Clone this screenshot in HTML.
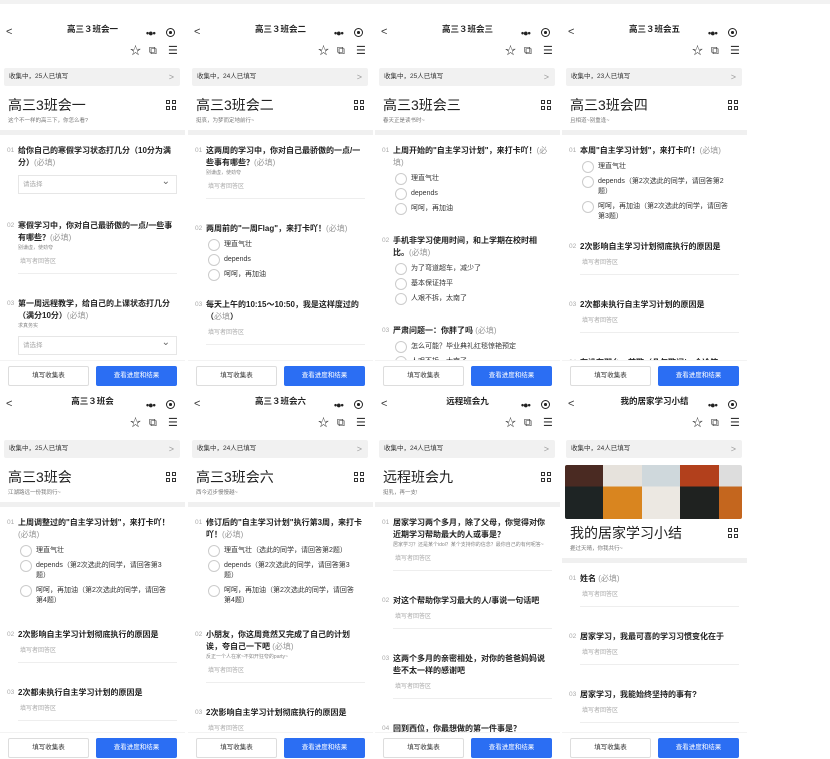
<!DOCTYPE html>
<html><head><meta charset="utf-8"><style>
*{margin:0;padding:0;box-sizing:border-box}
body{width:830px;height:759px;background:#fff;position:relative;overflow:hidden;font-family:"Liberation Sans","Noto Sans CJK SC",sans-serif;color:#222}
.p{position:absolute;width:185px;height:370px;overflow:hidden;background:#fff}
.nav{position:absolute;top:4px;left:0;width:185px;height:14px;font-size:8.5px;font-weight:bold;text-align:center;line-height:14px}
.back{position:absolute;left:6px;top:3px;font-size:11px;font-weight:normal;color:#333;line-height:14px}
.dots{position:absolute;left:146px;top:6px;font-size:9px;letter-spacing:-1px;line-height:10px}
.tgt{position:absolute;left:166px;top:6px;width:9px;height:9px;border:1.3px solid #222;border-radius:50%}
.tgt:after{content:"";position:absolute;left:2px;top:2px;width:2.5px;height:2.5px;background:#222;border-radius:50%}
.ic{position:absolute;top:27px;font-size:11px;line-height:12px;color:#333}
.bar{position:absolute;left:4px;top:50px;width:176px;height:18px;background:#f1f1f1;border-radius:2px;font-size:6.5px;line-height:18px;padding-left:5px;color:#333}
.bar b{position:absolute;right:6px;top:0;font-weight:normal;color:#999;font-size:9px}
.ttl{position:absolute;left:8px;top:78px;font-size:14px;line-height:18px;color:#222}
.grid{position:absolute;left:166px;top:82px;width:10px;height:10px;background:
linear-gradient(#fff,#fff) 4px 0/2px 10px no-repeat,linear-gradient(#fff,#fff) 0 4px/10px 2px no-repeat,#333;outline:0}
.grid:after{content:"";position:absolute;left:1px;top:1px;width:8px;height:8px;background:linear-gradient(#fff,#fff) 0 0/2px 2px no-repeat,linear-gradient(#fff,#fff) 6px 0/2px 2px no-repeat,linear-gradient(#fff,#fff) 0 6px/2px 2px no-repeat,linear-gradient(#fff,#fff) 6px 6px/2px 2px no-repeat;}
.sub{position:absolute;left:8px;top:98px;font-size:5.5px;color:#777}
.band{position:absolute;left:0;top:112px;width:185px;height:5px;background:#f0f0f0}
.qs{position:absolute;left:0;top:117px;width:185px;height:225px;overflow:hidden}
.q{position:relative;padding:10px 8px 4px 18px}
.q .t{font-size:8px;font-weight:bold;line-height:12px;color:#222}
.q .t i{font-style:normal;font-weight:normal;color:#999}
.q .n{position:absolute;left:7px;top:10px;font-size:6.5px;color:#aaa;line-height:12px}
.q .s{font-size:5px;color:#888;line-height:8px}
.o{position:relative;padding-left:16px;padding-right:6px;font-size:7px;line-height:10px;margin:5px 0 5px 2px;color:#333}
.o:before{content:"";position:absolute;left:0;top:-1px;width:10px;height:10px;border:1px solid #ccc;border-radius:50%}
.in{font-size:6px;color:#aaa;height:20px;line-height:17px;border-bottom:1px solid #eee;margin:2px 0 10px 0;padding-left:2px}
.sel{height:19px;border:1px solid #e6e6e6;font-size:6.5px;color:#aaa;line-height:17px;padding-left:4px;margin:6px 0 12px 0;position:relative}
.sel:after{content:"⌄";position:absolute;right:6px;top:-3px;font-size:10px;color:#666}
.ft{position:absolute;left:0;top:342px;width:185px;height:28px;background:#fff;border-top:1px solid #f3f3f3}
.b1{position:absolute;left:8px;top:5px;width:81px;height:20px;border:1px solid #ddd;border-radius:2px;font-size:6.5px;text-align:center;line-height:18px;color:#333}
.b2{position:absolute;left:96px;top:5px;width:81px;height:20px;background:#2b6ef3;border-radius:2px;font-size:6.5px;text-align:center;line-height:20px;color:#fff}
.img{position:absolute;left:3px;top:75px;width:177px;height:54px;border-radius:2px;overflow:hidden;display:flex}
.img div{flex:1;position:relative}
</style></head><body>

<div class="p" style="left:0;top:18px">
<div class="nav"><span class="back">&lt;</span>高三３班会一<span class="dots">•●•</span><span class="tgt"></span></div>
<span class="ic" style="left:130px">☆</span><span class="ic" style="left:149px">⧉</span><span class="ic" style="left:168px">☰</span>
<div class="bar">收集中，25人已填写<b>&gt;</b></div>
<div class="ttl">高三3班会一</div><div class="grid"></div>
<div class="sub">这个不一样的高三下，你怎么看?</div><div class="band"></div>
<div class="qs">
<div class="q"><span class="n">01</span><div class="t">给你自己的寒假学习状态打几分（10分为满分）<i>(必填)</i></div><div class="sel">请选择</div></div>
<div class="q"><span class="n">02</span><div class="t">寒假学习中，你对自己最骄傲的一点/一些事有哪些？<i>(必填)</i></div><div class="s">别谦虚，使劲夸</div><div class="in">填写者回答区</div></div>
<div class="q"><span class="n">03</span><div class="t">第一周远程教学，给自己的上课状态打几分（满分10分）<i>(必填)</i></div><div class="s">求真务实</div><div class="sel">请选择</div></div>
</div>
<div class="ft"><div class="b1">填写收集表</div><div class="b2">查看进度和结果</div></div>
</div>

<div class="p" style="left:188px;top:18px">
<div class="nav"><span class="back">&lt;</span>高三３班会二<span class="dots">•●•</span><span class="tgt"></span></div>
<span class="ic" style="left:130px">☆</span><span class="ic" style="left:149px">⧉</span><span class="ic" style="left:168px">☰</span>
<div class="bar">收集中，24人已填写<b>&gt;</b></div>
<div class="ttl">高三3班会二</div><div class="grid"></div>
<div class="sub">挺哀，为梦而定地前行~</div><div class="band"></div>
<div class="qs">
<div class="q"><span class="n">01</span><div class="t">这两周的学习中，你对自己最骄傲的一点/一些事有哪些？<i>(必填)</i></div><div class="s">别谦虚，使劲夸</div><div class="in">填写者回答区</div></div>
<div class="q"><span class="n">02</span><div class="t">两周前的"一周Flag"，来打卡吖！<i>(必填)</i></div><div class="o">理直气壮</div><div class="o">depends</div><div class="o">呵呵，再加油</div></div>
<div class="q"><span class="n">03</span><div class="t">每天上午的10:15～10:50，我是这样度过的（<i>必填</i>）</div><div class="in">填写者回答区</div></div>
<div class="q"><span class="n">04</span><div class="t">每天10:25以外做些啥，我是这样度过的</div></div>
</div>
<div class="ft"><div class="b1">填写收集表</div><div class="b2">查看进度和结果</div></div>
</div>

<div class="p" style="left:375px;top:18px">
<div class="nav"><span class="back">&lt;</span>高三３班会三<span class="dots">•●•</span><span class="tgt"></span></div>
<span class="ic" style="left:130px">☆</span><span class="ic" style="left:149px">⧉</span><span class="ic" style="left:168px">☰</span>
<div class="bar">收集中，25人已填写<b>&gt;</b></div>
<div class="ttl">高三3班会三</div><div class="grid"></div>
<div class="sub">春天正是读书时~</div><div class="band"></div>
<div class="qs">
<div class="q"><span class="n">01</span><div class="t">上周开始的"自主学习计划"，来打卡吖！<i>(必填)</i></div><div class="o">理直气壮</div><div class="o">depends</div><div class="o">呵呵，再加油</div></div>
<div class="q" style="padding-top:12px"><span class="n" style="top:12px">02</span><div class="t">手机非学习使用时间，和上学期在校时相比。<i>(必填)</i></div><div class="o">为了弯道超车，减少了</div><div class="o">基本保证持平</div><div class="o">人艰不拆，太南了</div></div>
<div class="q" style="padding-top:12px"><span class="n" style="top:12px">03</span><div class="t">严肃问题一：你胖了吗 <i>(必填)</i></div><div class="o">怎么可能？毕业典礼红毯惊艳预定</div><div class="o">人艰不拆，太南了</div></div>
</div>
<div class="ft"><div class="b1">填写收集表</div><div class="b2">查看进度和结果</div></div>
</div>

<div class="p" style="left:562px;top:18px">
<div class="nav"><span class="back">&lt;</span>高三３班会五<span class="dots">•●•</span><span class="tgt"></span></div>
<span class="ic" style="left:130px">☆</span><span class="ic" style="left:149px">⧉</span><span class="ic" style="left:168px">☰</span>
<div class="bar">收集中，23人已填写<b>&gt;</b></div>
<div class="ttl">高三3班会四</div><div class="grid"></div>
<div class="sub">且相道~别重逢~</div><div class="band"></div>
<div class="qs">
<div class="q"><span class="n">01</span><div class="t">本周"自主学习计划"，来打卡吖！<i>(必填)</i></div><div class="o">理直气壮</div><div class="o">depends（第2次选此的同学，请回答第2题）</div><div class="o">呵呵，再加油（第2次选此的同学，请回答第3题）</div></div>
<div class="q"><span class="n">02</span><div class="t">2次影响自主学习计划彻底执行的原因是</div><div class="in">填写者回答区</div></div>
<div class="q"><span class="n">03</span><div class="t">2次都未执行自主学习计划的原因是</div><div class="in">填写者回答区</div></div>
<div class="q"><span class="n">04</span><div class="t">有没有那么一首歌（几句歌词/一个冷笑话），</div></div>
</div>
<div class="ft"><div class="b1">填写收集表</div><div class="b2">查看进度和结果</div></div>
</div>

<div class="p" style="left:0;top:390px;height:369px">
<div class="nav"><span class="back">&lt;</span>高三３班会<span class="dots">•●•</span><span class="tgt"></span></div>
<span class="ic" style="left:130px">☆</span><span class="ic" style="left:149px">⧉</span><span class="ic" style="left:168px">☰</span>
<div class="bar">收集中，25人已填写<b>&gt;</b></div>
<div class="ttl">高三3班会</div><div class="grid"></div>
<div class="sub">江湖路远一份我同行~</div><div class="band"></div>
<div class="qs">
<div class="q"><span class="n">01</span><div class="t">上周调整过的"自主学习计划"，来打卡吖！<i>(必填)</i></div><div class="o">理直气壮</div><div class="o">depends（第2次选此的同学，请回答第3题）</div><div class="o">呵呵，再加油（第2次选此的同学，请回答第4题）</div></div>
<div class="q" style="padding-top:14px"><span class="n" style="top:14px">02</span><div class="t">2次影响自主学习计划彻底执行的原因是</div><div class="in">填写者回答区</div></div>
<div class="q"><span class="n">03</span><div class="t">2次都未执行自主学习计划的原因是</div><div class="in">填写者回答区</div></div>
</div>
<div class="ft"><div class="b1">填写收集表</div><div class="b2">查看进度和结果</div></div>
</div>

<div class="p" style="left:188px;top:390px;height:369px">
<div class="nav"><span class="back">&lt;</span>高三３班会六<span class="dots">•●•</span><span class="tgt"></span></div>
<span class="ic" style="left:130px">☆</span><span class="ic" style="left:149px">⧉</span><span class="ic" style="left:168px">☰</span>
<div class="bar">收集中，24人已填写<b>&gt;</b></div>
<div class="ttl">高三3班会六</div><div class="grid"></div>
<div class="sub">西今迈步慢慢越~</div><div class="band"></div>
<div class="qs">
<div class="q"><span class="n">01</span><div class="t">修订后的"自主学习计划"执行第3周，来打卡吖！<i>(必填)</i></div><div class="o">理直气壮（选此的同学，请回答第2题）</div><div class="o">depends（第2次选此的同学，请回答第3题）</div><div class="o">呵呵，再加油（第2次选此的同学，请回答第4题）</div></div>
<div class="q" style="padding-top:14px"><span class="n" style="top:14px">02</span><div class="t">小朋友，你这周竟然又完成了自己的计划诶，夸自己一下吧 <i>(必填)</i></div><div class="s">反正一个人在家~不如开狂夸的party~</div><div class="in">填写者回答区</div></div>
<div class="q"><span class="n">03</span><div class="t">2次影响自主学习计划彻底执行的原因是</div><div class="in">填写者回答区</div></div>
</div>
<div class="ft"><div class="b1">填写收集表</div><div class="b2">查看进度和结果</div></div>
</div>

<div class="p" style="left:375px;top:390px;height:369px">
<div class="nav"><span class="back">&lt;</span>远程班会九<span class="dots">•●•</span><span class="tgt"></span></div>
<span class="ic" style="left:130px">☆</span><span class="ic" style="left:149px">⧉</span><span class="ic" style="left:168px">☰</span>
<div class="bar">收集中，24人已填写<b>&gt;</b></div>
<div class="ttl">远程班会九</div><div class="grid"></div>
<div class="sub">挺乳，再一支!</div><div class="band"></div>
<div class="qs">
<div class="q"><span class="n">01</span><div class="t">居家学习两个多月，除了父母，你觉得对你近期学习帮助最大的人或事是？</div><div class="s">居家学习？还是某个idol？某个支持你的信念？最你自己的有何呢答~</div><div class="in">填写者回答区</div></div>
<div class="q"><span class="n">02</span><div class="t">对这个帮助你学习最大的人/事说一句话吧</div><div class="in">填写者回答区</div></div>
<div class="q"><span class="n">03</span><div class="t">这两个多月的亲密相处，对你的爸爸妈妈说些不太一样的感谢吧</div><div class="in">填写者回答区</div></div>
<div class="q"><span class="n">04</span><div class="t">回到西位，你最想做的第一件事是？</div></div>
</div>
<div class="ft"><div class="b1">填写收集表</div><div class="b2">查看进度和结果</div></div>
</div>

<div class="p" style="left:562px;top:390px;height:369px">
<div class="nav"><span class="back">&lt;</span>我的居家学习小结<span class="dots">•●•</span><span class="tgt"></span></div>
<span class="ic" style="left:130px">☆</span><span class="ic" style="left:149px">⧉</span><span class="ic" style="left:168px">☰</span>
<div class="bar">收集中，24人已填写<b>&gt;</b></div>
<div class="img">
<div style="background:linear-gradient(#4a2a22 0 40%,#1e2424 40%)"></div>
<div style="background:linear-gradient(#e6e2dc 0 40%,#d9851f 40%)"></div>
<div style="background:linear-gradient(#cfd8dc 0 40%,#ece8e2 40%)"></div>
<div style="background:linear-gradient(#b2401c 0 40%,#1f2220 40%)"></div>
<div style="flex:.6;background:linear-gradient(#ddd 0 40%,#c4661e 40%)"></div>
</div>
<div class="ttl" style="top:134px">我的居家学习小结</div><div class="grid" style="top:138px"></div>
<div class="sub" style="top:154px">捱过天晴，你我共行~</div><div class="band" style="top:168px"></div>
<div class="qs" style="top:173px;height:169px">
<div class="q"><span class="n">01</span><div class="t">姓名 <i>(必填)</i></div><div class="in">填写者回答区</div></div>
<div class="q"><span class="n">02</span><div class="t">居家学习，我最可喜的学习习惯变化在于</div><div class="in">填写者回答区</div></div>
<div class="q"><span class="n">03</span><div class="t">居家学习，我能始终坚持的事有?</div><div class="in">填写者回答区</div></div>
</div>
<div class="ft"><div class="b1">填写收集表</div><div class="b2">查看进度和结果</div></div>
</div>

<div style="position:absolute;left:0;top:0;width:830px;height:4px;background:#f2f2f2"></div>
</body></html>
